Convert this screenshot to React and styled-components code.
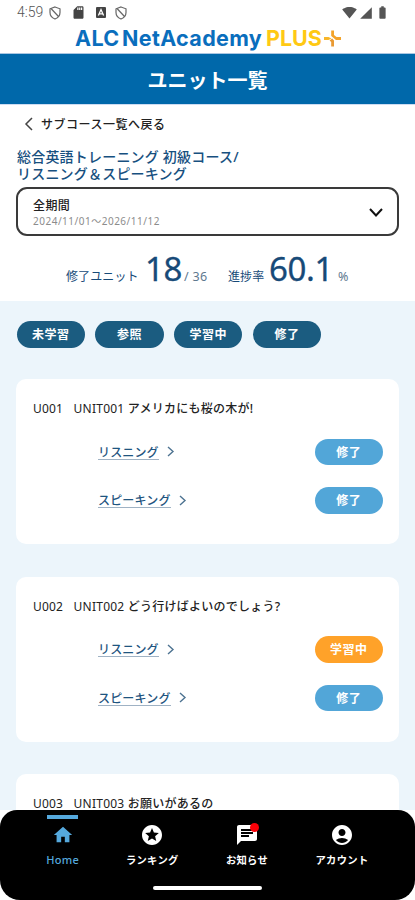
import React from "react";
import styled, { createGlobalStyle } from "styled-components";
import {
  MdHome,
  MdStars,
  MdChat,
  MdAccountCircle,
  MdSdCard,
  MdSignalWifi4Bar,
  MdSignalCellular4Bar,
  MdBatteryFull,
} from "react-icons/md";

const GlobalStyle = createGlobalStyle`
* {
  box-sizing: border-box;
}
body {
  margin: 0;
  background-color: white;
  font-family: "Noto Sans", "Noto Sans CJK JP", sans-serif;
}
button {
  font-family: inherit;
  cursor: pointer;
}
`

const Screen = styled.div`
display: flex;
flex-direction: column;
width: 415px;
height: 900px;
overflow: hidden;
background-color: white;
`

const StatusBar = styled.div`
display: flex;
flex-shrink: 0;
justify-content: space-between;
align-items: center;
height: 25px;
padding: 0 25px 0 17px;
color: #555;
`
const StatusGroup = styled.div`
display: flex;
align-items: center;
gap: ${props => props.gap};
svg {
  display: block;
}
`
const Clock = styled.span`
font-family: Roboto, sans-serif;
font-size: 14px;
font-weight: 300;
line-height: 25px;
width: 27px;
margin-right: 5px;
white-space: nowrap;
`

const Logo = styled.div`
display: flex;
flex-shrink: 0;
align-items: center;
height: 28px;
padding: 0 0 2px 75px;
font-family: Inter, sans-serif;
font-size: 21.5px;
font-weight: 700;
white-space: nowrap;
color: #0a6ebd;
`
const LogoName = styled.span`
width: 191px;
letter-spacing: 0.36px;
word-spacing: -3px;
`
const LogoPlus = styled.span`
width: 58px;
color: #ffc913;
`

const TitleBar = styled.h1`
display: flex;
flex-shrink: 0;
justify-content: center;
align-items: center;
height: 52px;
margin: 0;
padding-top: 1px;
border-top: 1px solid #a9c6e2;
border-bottom: 1px solid #cddcf2;
background-color: #0068aa;
color: white;
font-size: 20px;
font-weight: 700;
`

const Summary = styled.div`
flex-shrink: 0;
height: 196px;
padding: 0 16px;
`
const BackLink = styled.button`
display: flex;
align-items: center;
gap: 8px;
height: 38px;
padding: 0 0 0 8px;
border: none;
background: none;
color: #222;
font-size: 12px;
font-weight: 500;
letter-spacing: 0.5px;
`
const CourseName = styled.h2`
height: 44px;
margin: 0;
padding: 5px 0 0 1px;
color: #17507f;
font-size: 14px;
font-weight: 500;
line-height: 17px;
letter-spacing: 0.2px;
`
const PeriodSelect = styled.button`
display: flex;
justify-content: space-between;
align-items: center;
width: 100%;
height: 49px;
padding: 2px 14px 0 15px;
border: 2px solid #3a3a3a;
border-radius: 11px;
background-color: white;
text-align: left;
`
const PeriodName = styled.div`
color: #222;
font-size: 12px;
font-weight: 500;
line-height: 17px;
letter-spacing: 0.4px;
`
const PeriodDates = styled.div`
color: #8c8c8c;
font-size: 10px;
line-height: 15px;
letter-spacing: 0.5px;
`
const Stats = styled.div`
display: flex;
align-items: baseline;
padding-left: 50px;
color: #174a78;
white-space: nowrap;
line-height: 66px;
`
const StatLabel = styled.span`
width: ${props => props.width};
font-size: 12px;
letter-spacing: 0.1px;
`
const StatValue = styled.span`
width: ${props => props.width};
font-size: 33px;
font-weight: 400;
-webkit-text-stroke: 0.3px #174a78;
letter-spacing: -0.4px;
`
const StatUnit = styled.span`
width: ${props => props.width};
color: #60798f;
font-size: 12.5px;
letter-spacing: 0.3px;
`

const Content = styled.div`
flex: 1;
min-height: 0;
overflow: hidden;
padding: 20px 16px 0;
background-color: #ecf5fb;
`
const Filters = styled.div`
display: flex;
gap: 10.4px;
margin-bottom: 31.5px;
padding-left: 0.5px;
`
const Pill = styled.button`
display: flex;
justify-content: center;
align-items: center;
width: 68.4px;
height: 26.5px;
padding: 0;
border: none;
border-radius: 14px;
background-color: ${props => props.color};
color: white;
font-size: 12px;
font-weight: 700;
letter-spacing: 0.5px;
`

const Card = styled.div`
height: 165px;
margin-bottom: 32.5px;
padding: 20px 16px 0 17px;
border-radius: 10px;
background-color: white;
`
const CardHeader = styled.div`
display: flex;
height: 39.5px;
color: #222;
font-size: 12px;
font-weight: 500;
line-height: 19px;
white-space: nowrap;
`
const UnitCode = styled.span`
width: 40.5px;
font-weight: 400;
letter-spacing: 0.2px;
`
const UnitName = styled.span`
letter-spacing: 0.25px;
`
const Latin = styled.span`
font-weight: 400;
`
const Lesson = styled.div`
display: flex;
justify-content: space-between;
align-items: center;
height: 26.5px;
margin-bottom: 22.2px;
padding-left: 65px;
`
const LessonLink = styled.button`
display: flex;
align-items: center;
gap: 7px;
padding: 0;
border: none;
background: none;
color: #1f5580;
font-size: 12px;
font-weight: 500;
`
const LessonName = styled.span`
height: 16px;
border-bottom: 1px solid #9fb2c4;
line-height: 17px;
letter-spacing: 0.15px;
`

const NavWrapper = styled.div`
flex-shrink: 0;
background-color: white;
`
const NavBar = styled.div`
height: 90px;
padding-left: 18px;
border-radius: 17px 17px 20px 20px;
background-color: black;
`
const NavItems = styled.div`
display: grid;
grid-template-columns: 89.5px 89.5px 100px 90px;
height: 76px;
`
const NavItem = styled.div`
display: flex;
flex-direction: column;
align-items: center;
padding-top: 5px;
color: ${props => (props.active ? "#55a9dd" : "white")};
font-size: ${props => (props.active ? "11px" : "10.3px")};
font-weight: ${props => (props.active ? 500 : 700)};
white-space: nowrap;
`
const NavMarker = styled.div`
width: 31px;
height: 4px;
margin-bottom: 4px;
background-color: ${props => (props.active ? "#55a9dd" : "transparent")};
`
const NavIcon = styled.div`
position: relative;
display: flex;
justify-content: center;
align-items: center;
width: 24px;
height: 24px;
margin-bottom: 4px;
`
const Badge = styled.div`
position: absolute;
top: 0;
right: 0;
width: 9px;
height: 9px;
border-radius: 50%;
background-color: #fb0007;
`
const NavLabel = styled.span`
line-height: 18px;
letter-spacing: 0.3px;
`
const HomeIndicator = styled.div`
width: 109px;
height: 4px;
margin-left: 135px;
border-radius: 2px;
background-color: white;
`

const NAVY = "#1b5c80"
const BLUE = "#52a6d8"
const ORANGE = "#ffa229"

const filters = ["未学習", "参照", "学習中", "修了"]

const units = [
  {
    code: "U001",
    name: "アメリカにも桜の木が!",
    lessons: [
      { name: "リスニング", status: "修了" },
      { name: "スピーキング", status: "修了" },
    ],
  },
  {
    code: "U002",
    name: "どう行けばよいのでしょう?",
    lessons: [
      { name: "リスニング", status: "学習中" },
      { name: "スピーキング", status: "修了" },
    ],
  },
  {
    code: "U003",
    name: "お願いがあるの",
    lessons: [],
  },
]

// material "home" shape, filled
const HomeIcon = () => <MdHome size={22} />

const navItems = [
  { label: "Home", icon: <HomeIcon />, active: true },
  { label: "ランキング", icon: <MdStars size={24} /> },
  { label: "お知らせ", icon: <MdChat size={24} />, badge: true },
  { label: "アカウント", icon: <MdAccountCircle size={24} /> },
]

const ShieldIcon = () => (
  <svg width="12" height="14" viewBox="0 0 12 14" fill="none" stroke="#666" strokeWidth="1.2">
    <path d="M6 1 L11 2.8 V6.5 C11 9.6 9 11.8 6 13 C3 11.8 1 9.6 1 6.5 V2.8 Z" />
    <path d="M2 2.5 L9.5 10.5" />
  </svg>
)

const KeyboardIcon = () => (
  <svg width="10" height="11" viewBox="0 0 10 11">
    <rect width="10" height="11" rx="1" fill="#444" />
    <path d="M2.4 8.6 L5 2.6 L7.6 8.6 M3.4 6.8 H6.6" fill="none" stroke="white" strokeWidth="1.3" />
  </svg>
)

const SparkIcon = () => (
  <svg width="17" height="17" viewBox="0 0 17 17">
    <path d="M0 7 H4.5 L7.5 8.5 L4.5 10 H0 Z" fill="#f8b62a" />
    <path d="M7.2 0.5 H10 V5 L12.5 7 H17 V10 H12 L7.2 6 Z" fill="#f3a32a" />
    <path d="M5.6 10.4 L8.2 8.4 L10 10.5 V16.5 H7.2 V12 Z" fill="#e99a33" />
  </svg>
)

const Chevron = ({ width, height, d, color, stroke }) => (
  <svg width={width} height={height} viewBox={`0 0 ${width} ${height}`} fill="none">
    <path d={d} stroke={color} strokeWidth={stroke} />
  </svg>
)

export default function App() {
  return (
    <>
      <GlobalStyle />
      <Screen>
        <StatusBar>
          <StatusGroup gap="0px">
            <Clock>4:59</Clock>
            <StatusGroup gap="9.8px">
              <ShieldIcon />
              <MdSdCard size={15} color="#444" />
              <KeyboardIcon />
              <ShieldIcon />
            </StatusGroup>
          </StatusGroup>
          <StatusGroup gap="2px">
            <MdSignalWifi4Bar size={15} />
            <MdSignalCellular4Bar size={14} />
            <MdBatteryFull size={15} />
          </StatusGroup>
        </StatusBar>
        <Logo>
          <LogoName>ALC NetAcademy</LogoName>
          <LogoPlus>PLUS</LogoPlus>
          <SparkIcon />
        </Logo>
        <TitleBar>ユニット一覧</TitleBar>

        <Summary>
          <BackLink>
            <Chevron width={9} height={14} d="M8 1 L2 7 L8 13" color="#444" stroke={1.5} />
            サブコース一覧へ戻る
          </BackLink>
          <CourseName>
            総合英語トレーニング 初級コース/
            <br />
            リスニング＆スピーキング
          </CourseName>
          <PeriodSelect>
            <div>
              <PeriodName>全期間</PeriodName>
              <PeriodDates>2024/11/01～2026/11/12</PeriodDates>
            </div>
            <Chevron width={14} height={9} d="M1 1 L7 7.5 L13 1" color="#111" stroke={2} />
          </PeriodSelect>
          <Stats>
            <StatLabel width="79px">修了ユニット</StatLabel>
            <StatValue width="39px">18</StatValue>
            <StatUnit width="44px">/ 36</StatUnit>
            <StatLabel width="41px">進捗率</StatLabel>
            <StatValue width="69px">60.1</StatValue>
            <StatUnit width="12px">%</StatUnit>
          </Stats>
        </Summary>

        <Content>
          <Filters>
            {filters.map(filter => (
              <Pill key={filter} color={NAVY}>{filter}</Pill>
            ))}
          </Filters>
          {units.map(unit => (
            <Card key={unit.code}>
              <CardHeader>
                <UnitCode>{unit.code}</UnitCode>
                <UnitName><Latin>UNIT{unit.code.slice(1)} </Latin>{unit.name}</UnitName>
              </CardHeader>
              {unit.lessons.map(lesson => (
                <Lesson key={lesson.name}>
                  <LessonLink>
                    <LessonName>{lesson.name}</LessonName>
                    <Chevron width={9} height={11} d="M2 1 L7 5.5 L2 10" color="#4d7391" stroke={1.4} />
                  </LessonLink>
                  <Pill color={lesson.status === "学習中" ? ORANGE : BLUE}>{lesson.status}</Pill>
                </Lesson>
              ))}
            </Card>
          ))}
        </Content>

        <NavWrapper>
          <NavBar>
            <NavItems>
              {navItems.map(item => (
                <NavItem key={item.label} active={item.active}>
                  <NavMarker active={item.active} />
                  <NavIcon>
                    {item.icon}
                    {item.badge && <Badge />}
                  </NavIcon>
                  <NavLabel>{item.label}</NavLabel>
                </NavItem>
              ))}
            </NavItems>
            <HomeIndicator />
          </NavBar>
        </NavWrapper>
      </Screen>
    </>
  )
}
